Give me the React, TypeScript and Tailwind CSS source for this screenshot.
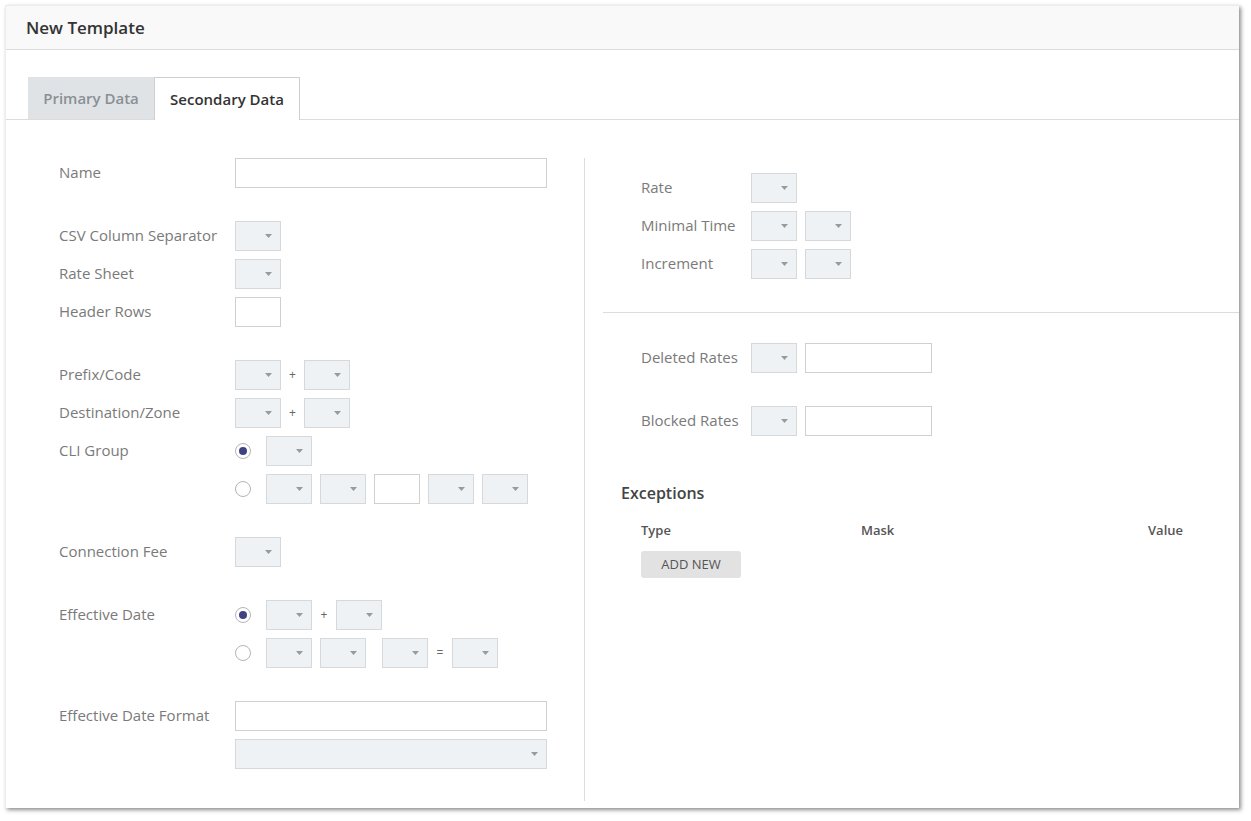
import React from 'react';

function Caret() {
  return (
    <svg width="7" height="4" viewBox="0 0 7 4" className="block">
      <path d="M0 0h7L3.5 4z" fill="#9a9a9a" />
    </svg>
  );
}

function Select({ w = 'w-[46px]' }: { w?: string }) {
  return (
    <div className={`${w} h-[30px] shrink-0 bg-[#eff2f5] border border-[#d6d9dc] flex items-center justify-end pr-[8px]`}>
      <Caret />
    </div>
  );
}

function Input({ w = 'w-[46px]' }: { w?: string }) {
  return <div className={`${w} h-[30px] shrink-0 bg-white border border-[#d0d0d0]`} />;
}

function Radio({ checked }: { checked?: boolean }) {
  return (
    <div className="w-[16px] h-[16px] shrink-0 rounded-full border border-[#b5b5b5] bg-white flex items-center justify-center">
      {checked && <div className="w-[8px] h-[8px] rounded-full bg-[#3e437f]" />}
    </div>
  );
}

function Sym({ c, w = 'w-[23px]' }: { c: string; w?: string }) {
  return <span className={`${w} text-center text-[12px] text-[#666] shrink-0`}>{c}</span>;
}

function Row({ label, children, lw = 'w-[176px]' }: { label: string; children: React.ReactNode; lw?: string }) {
  return (
    <div className="flex items-start">
      <div className={`${lw} shrink-0 h-[28px] flex items-center text-[15px] text-[#7a7a7a] whitespace-nowrap`}>{label}</div>
      <div className="flex flex-col gap-[8px]">{children}</div>
    </div>
  );
}

export default function App() {
  return (
    <div className="w-[1251px] h-[821px] bg-white pt-[5px] pl-[5px]" style={{ fontFamily: '"Open Sans", "Liberation Sans", sans-serif' }}>
      <div className="w-[1234px] h-[803px] bg-white border-t border-l border-[#ececec] shadow-[2px_2px_4px_rgba(0,0,0,0.45)] flex flex-col">
        {/* Header */}
        <div className="h-[44px] bg-[#f9f9f9] border-b border-[#dcdcdc] flex items-center pl-[20px] text-[17px] font-semibold text-[#333]">
          New Template
        </div>

        {/* Tabs */}
        <div className="pt-[27px] pl-[22px] border-b border-[#dcdcdc] flex">
          <div className="w-[126px] h-[42px] bg-[#dfe3e6] flex items-center justify-center text-[15px] font-semibold text-[#8a8f94]">
            Primary Data
          </div>
          <div className="w-[146px] h-[43px] -mb-px bg-white border border-b-0 border-[#cfcfcf] flex items-center justify-center text-[15px] font-semibold text-[#333]">
            Secondary Data
          </div>
        </div>

        {/* Body */}
        <div className="flex flex-1">
          {/* Left column */}
          <div className="w-[579px] shrink-0 mt-[38px] mb-[7px] border-r border-[#dcdcdc] pl-[53px]">
            <Row label="Name">
              <Input w="w-[312px]" />
            </Row>

            <div className="mt-[33px] flex flex-col gap-[8px]">
              <Row label="CSV Column Separator">
                <Select />
              </Row>
              <Row label="Rate Sheet">
                <Select />
              </Row>
              <Row label="Header Rows">
                <Input />
              </Row>
            </div>

            <div className="mt-[33px] flex flex-col gap-[8px]">
              <Row label="Prefix/Code">
                <div className="flex items-center">
                  <Select />
                  <Sym c="+" />
                  <Select />
                </div>
              </Row>
              <Row label="Destination/Zone">
                <div className="flex items-center">
                  <Select />
                  <Sym c="+" />
                  <Select />
                </div>
              </Row>
              <Row label="CLI Group">
                <div className="flex items-center gap-[15px]">
                  <Radio checked />
                  <Select />
                </div>
                <div className="flex items-center gap-[15px]">
                  <Radio />
                  <div className="flex items-center gap-[8px]">
                    <Select />
                    <Select />
                    <Input />
                    <Select />
                    <Select />
                  </div>
                </div>
              </Row>
            </div>

            <div className="mt-[33px]">
              <Row label="Connection Fee">
                <Select />
              </Row>
            </div>

            <div className="mt-[33px]">
              <Row label="Effective Date">
                <div className="flex items-center gap-[15px]">
                  <Radio checked />
                  <div className="flex items-center">
                    <Select />
                    <Sym c="+" w="w-[24px]" />
                    <Select />
                  </div>
                </div>
                <div className="flex items-center gap-[15px]">
                  <Radio />
                  <div className="flex items-center">
                    <Select />
                    <div className="w-[8px]" />
                    <Select />
                    <div className="w-[16px]" />
                    <Select />
                    <Sym c="=" w="w-[24px]" />
                    <Select />
                  </div>
                </div>
              </Row>
            </div>

            <div className="mt-[33px]">
              <Row label="Effective Date Format">
                <Input w="w-[312px]" />
                <Select w="w-[312px]" />
              </Row>
            </div>
          </div>

          {/* Right column */}
          <div className="flex-1 pt-[53px] pl-[18px]">
            <div className="pl-[38px] flex flex-col gap-[8px]">
              <Row label="Rate" lw="w-[110px]">
                <Select />
              </Row>
              <Row label="Minimal Time" lw="w-[110px]">
                <div className="flex gap-[8px]">
                  <Select />
                  <Select />
                </div>
              </Row>
              <Row label="Increment" lw="w-[110px]">
                <div className="flex gap-[8px]">
                  <Select />
                  <Select />
                </div>
              </Row>
            </div>

            <div className="mt-[33px] border-t border-[#dcdcdc]" />

            <div className="pl-[38px] pt-[30px]">
              <Row label="Deleted Rates" lw="w-[110px]">
                <div className="flex gap-[8px]">
                  <Select />
                  <Input w="w-[127px]" />
                </div>
              </Row>
              <div className="mt-[33px]">
                <Row label="Blocked Rates" lw="w-[110px]">
                  <div className="flex gap-[8px]">
                    <Select />
                    <Input w="w-[127px]" />
                  </div>
                </Row>
              </div>
            </div>

            <div className="mt-[46px] pl-[18px] text-[16px] font-semibold text-[#444] leading-[22px]">Exceptions</div>

            <div className="pl-[38px] pr-[56px] mt-[17px]">
              <div className="flex text-[13px] font-semibold text-[#555] leading-[18px]">
                <div className="w-[220px]">Type</div>
                <div className="flex-1">Mask</div>
                <div>Value</div>
              </div>
              <button className="mt-[12px] w-[100px] h-[27px] rounded-[3px] bg-[#e2e2e2] text-[13px] text-[#555] uppercase flex items-center justify-center">
                Add New
              </button>
            </div>
          </div>
        </div>
      </div>
    </div>
  );
}
